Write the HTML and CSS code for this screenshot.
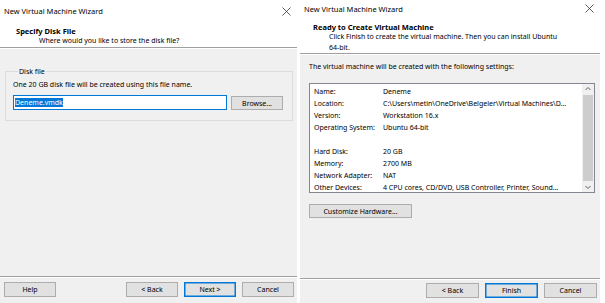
FILE: index.html
```html
<!DOCTYPE html>
<html lang="en">
<head>
    <meta charset="UTF-8">
    <title>New Virtual Machine Wizard</title>
    <link rel="stylesheet" href="styles.css">
</head>
<body>
    <div class="wizard wizard-left">
        <div class="titlebar">
            <span>New Virtual Machine Wizard</span>
            <svg class="close" width="9" height="9" viewBox="0 0 9 9"><path d="M0.5 0.5 L8.5 8.5 M8.5 0.5 L0.5 8.5" stroke="#333" stroke-width="0.8"/></svg>
        </div>
        <div class="header">
            <h1>Specify Disk File</h1>
            <p>Where would you like to store the disk file?</p>
        </div>
        <div class="content">
            <fieldset class="group">
                <legend>Disk file</legend>
                <p>One 20 GB disk file will be created using this file name.</p>
                <div class="file-row">
                    <div class="input"><span class="selected">Deneme.vmdk</span></div>
                    <button class="btn browse">Browse...</button>
                </div>
            </fieldset>
        </div>
        <div class="footer">
            <button class="btn">Help</button>
            <div class="spacer"></div>
            <button class="btn">&lt; Back</button>
            <button class="btn default">Next &gt;</button>
            <button class="btn">Cancel</button>
        </div>
    </div>

    <div class="wizard wizard-right">
        <div class="titlebar">
            <span>New Virtual Machine Wizard</span>
            <svg class="close" width="9" height="9" viewBox="0 0 9 9"><path d="M0.5 0.5 L8.5 8.5 M8.5 0.5 L0.5 8.5" stroke="#333" stroke-width="0.8"/></svg>
        </div>
        <div class="header">
            <h1>Ready to Create Virtual Machine</h1>
            <p>Click Finish to create the virtual machine. Then you can install Ubuntu <span class="nowrap">64-bit.</span></p>
        </div>
        <div class="content">
            <p class="intro">The virtual machine will be created with the following settings:</p>
            <div class="summary">
                <table>
                    <tr><td>Name:</td><td>Deneme</td></tr>
                    <tr><td>Location:</td><td>C:\Users\metin\OneDrive\Belgeler\Virtual Machines\D...</td></tr>
                    <tr><td>Version:</td><td>Workstation 16.x</td></tr>
                    <tr><td>Operating System:</td><td>Ubuntu 64-bit</td></tr>
                    <tr class="blank"><td></td><td></td></tr>
                    <tr><td>Hard Disk:</td><td>20 GB</td></tr>
                    <tr><td>Memory:</td><td>2700 MB</td></tr>
                    <tr><td>Network Adapter:</td><td>NAT</td></tr>
                    <tr><td>Other Devices:</td><td>4 CPU cores, CD/DVD, USB Controller, Printer, Sound...</td></tr>
                </table>
                <div class="scrollbar">
                    <svg class="arrow" width="12" height="10" viewBox="0 0 12 10"><path d="M3.5 6 L6 3.5 L8.5 6" fill="none" stroke="#606060" stroke-width="1"/></svg>
                    <div class="thumb"></div>
                    <svg class="arrow" width="12" height="10" viewBox="0 0 12 10"><path d="M3.5 4 L6 6.5 L8.5 4" fill="none" stroke="#606060" stroke-width="1"/></svg>
                </div>
            </div>
            <button class="btn customize">Customize Hardware...</button>
        </div>
        <div class="footer">
            <div class="spacer"></div>
            <button class="btn">&lt; Back</button>
            <button class="btn default">Finish</button>
            <button class="btn">Cancel</button>
        </div>
    </div>
</body>
</html>
```

FILE: styles.css
```css
* {
    margin: 0;
    padding: 0;
    box-sizing: border-box;
}

body {
    width: 605px;
    height: 303px;
    display: flex;
    gap: 3px;
    background: #fff;
    font-family: 'Noto Sans', sans-serif;
    font-size: 7px;
    color: #000;
    overflow: hidden;
}

.wizard {
    display: flex;
    flex-direction: column;
    height: 303px;
    background: #f0f0f0;
}

.wizard-left {
    width: 297px;
}

.wizard-right {
    width: 300px;
}

.titlebar {
    display: flex;
    justify-content: space-between;
    align-items: center;
    background: #fff;
    font-size: 7.5px;
    padding: 0 6px 0 4px;
}

.wizard-left .titlebar {
    height: 22px;
}

.wizard-right .titlebar {
    height: 17px;
}

.header {
    background: #fff;
    border-bottom: 1px solid #a0a0a0;
    box-shadow: 0 1px 0 #fff;
}

.wizard-left .header {
    height: 26px;
    padding: 4px 0 0 16px;
}

.wizard-right .header {
    height: 37px;
    padding: 5px 0 0 13px;
}

.header h1 {
    font-size: 7.5px;
    font-weight: bold;
    line-height: 10px;
}

.header p {
    padding-left: 23px;
    line-height: 10.5px;
}

.wizard-right .header p {
    padding-left: 16px;
    padding-right: 30px;
}

.nowrap {
    white-space: nowrap;
}

.content {
    flex: 1;
}

.wizard-left .content {
    padding: 19px 4px 0 5px;
}

.wizard-right .content {
    padding: 8px 5px 0 9px;
}

.group {
    border: 1px solid #dcdcdc;
    height: 54px;
    padding: 0 9px 0 7px;
}

.group legend {
    padding: 0 1px;
    margin-left: 5px;
    line-height: 9px;
}

.group p {
    margin-top: 4px;
    line-height: 10px;
}

.file-row {
    display: flex;
    gap: 4px;
    margin-top: 5px;
}

.input {
    width: 214px;
    height: 15px;
    border: 1px solid #0078d7;
    background: #fff;
    padding: 2px 1px;
    line-height: 9px;
}

.selected {
    background: #0078d7;
    color: #fff;
}

.btn {
    font-family: 'Noto Sans', sans-serif;
    font-size: 7px;
    background: #e1e1e1;
    border: 1px solid #adadad;
    color: #000;
    height: 15px;
    width: 52px;
}

.btn.default {
    border: 1px solid #0078d7;
    box-shadow: inset 0 0 0 0.5px #0078d7;
}

.browse {
    height: 14px;
    margin-top: 1px;
}

.intro {
    line-height: 10px;
}

.summary {
    display: flex;
    margin-top: 11px;
    width: 286px;
    height: 110px;
    border: 1px solid #828790;
    background: #fff;
}

.summary table {
    flex: 1;
    border-collapse: collapse;
    margin: 1px 0 0 4px;
    align-self: flex-start;
}

.summary td {
    height: 12px;
    line-height: 11px;
    white-space: nowrap;
}

.summary td:first-child {
    width: 69px;
}

.scrollbar {
    width: 12px;
    display: flex;
    flex-direction: column;
    align-items: center;
    background: #f0f0f0;
}

.arrow {
    display: block;
    flex: none;
}

.thumb {
    flex: 1;
    width: 10px;
    margin: 1px 0;
    background: #cdcdcd;
}

.customize {
    width: 103px;
    margin-top: 11px;
    height: 14px;
}

.footer {
    display: flex;
    gap: 6px;
    border-top: 1px solid #a0a0a0;
    box-shadow: inset 0 1px 0 #fff;
}

.wizard-left .footer {
    height: 27px;
    padding: 5px 3px 0 4px;
}

.wizard-right .footer {
    height: 25px;
    padding: 4px 3px 0 0;
}

.wizard-right .footer .btn {
    width: 53px;
}

.spacer {
    flex: 1;
}
```
